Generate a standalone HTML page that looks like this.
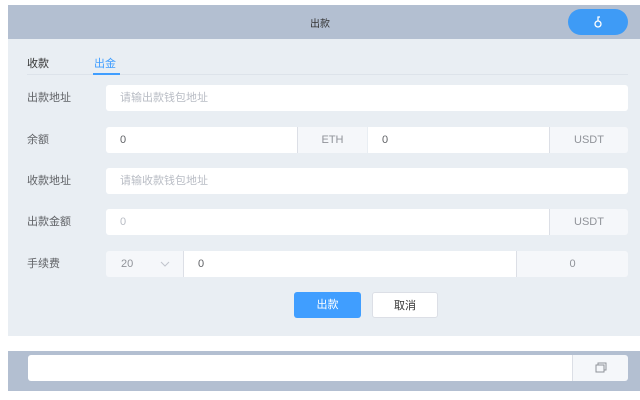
<!DOCTYPE html><html><head><meta charset="utf-8"><style>
*{margin:0;padding:0;box-sizing:border-box}
body{width:640px;height:400px;background:#fff;position:relative;overflow:hidden;font-family:"Liberation Sans","Noto Sans CJK SC",sans-serif;font-size:11px;color:#606266}
.a{position:absolute}
.hd{left:8px;top:5px;width:632px;height:34px;background:#b3bfd1}
.bd{left:8px;top:39px;width:632px;height:297px;background:#e9eef3}
.bt{left:8px;top:351px;width:632px;height:40px;background:#b3bfd1}
.in{background:#fff;border-radius:3px;height:26px;line-height:26px;padding-left:14px;color:#606266}
.ph{color:#b8bcc4}
.ad{background:#f5f7fa;height:26px;line-height:26px;text-align:center;color:#909399;border-left:1px solid #dcdfe6;border-radius:0 3px 3px 0}
.lb{left:27px;color:#606266}
</style></head><body>
<div class="a hd"></div>
<div class="a" style="left:0;width:640px;top:15px;text-align:center;font-size:10px;color:#333">出款</div>
<div class="a" style="left:568px;top:9px;width:60px;height:26px;border-radius:13px;background:#3e9bf6"></div>
<svg class="a" style="left:593px;top:15px" width="10" height="14" viewBox="0 0 10 14"><circle cx="5" cy="9" r="3" fill="none" stroke="#fff" stroke-width="1.3"/><path d="M5 6V2H7" fill="none" stroke="#fff" stroke-width="1.3"/></svg>
<div class="a bd"></div>
<div class="a" style="left:27px;top:55px;color:#333">收款</div>
<div class="a" style="left:94px;top:55px;color:#409eff">出金</div>
<div class="a" style="left:27px;top:74px;width:601px;height:1px;background:#dde3ea"></div>
<div class="a" style="left:93px;top:73px;width:27px;height:2px;background:#409eff"></div>

<div class="a lb" style="top:89px">出款地址</div>
<div class="a in ph" style="left:106px;top:85px;width:522px">请输出款钱包地址</div>

<div class="a lb" style="top:131px">余额</div>
<div class="a in" style="left:106px;top:127px;width:191px;border-radius:3px 0 0 3px">0</div>
<div class="a ad" style="left:297px;top:127px;width:70px;border-radius:0">ETH</div>
<div class="a in" style="left:368px;top:127px;width:181px;border-radius:0">0</div>
<div class="a ad" style="left:549px;top:127px;width:79px">USDT</div>

<div class="a lb" style="top:172px">收款地址</div>
<div class="a in ph" style="left:106px;top:168px;width:522px">请输收款钱包地址</div>

<div class="a lb" style="top:213px">出款金额</div>
<div class="a in ph" style="left:106px;top:209px;width:443px;border-radius:3px 0 0 3px">0</div>
<div class="a ad" style="left:549px;top:209px;width:79px">USDT</div>

<div class="a lb" style="top:255px">手续费</div>
<div class="a ad" style="left:106px;top:251px;width:77px;border-left:none;border-radius:3px 0 0 3px;text-align:left;padding-left:15px">20</div>
<svg class="a" style="left:160px;top:261px" width="10" height="6" viewBox="0 0 10 6"><path d="M1 1L5 5L9 1" fill="none" stroke="#c0c4cc" stroke-width="1"/></svg>
<div class="a in" style="left:183px;top:251px;width:333px;border-radius:0;border-left:1px solid #dcdfe6">0</div>
<div class="a ad" style="left:516px;top:251px;width:112px">0</div>

<div class="a" style="left:294px;top:292px;width:67px;height:26px;background:#409eff;border-radius:3px;color:#fff;text-align:center;line-height:26px">出款</div>
<div class="a" style="left:372px;top:292px;width:66px;height:26px;background:#fff;border-radius:3px;color:#333;text-align:center;line-height:26px;border:1px solid #dcdfe6">取消</div>

<div class="a bt"></div>
<div class="a in" style="left:28px;top:355px;width:544px;border-radius:3px 0 0 3px"></div>
<div class="a ad" style="left:572px;top:355px;width:56px"></div>
<svg class="a" style="left:595px;top:362px" width="12" height="11" viewBox="0 0 12 11"><rect x="1" y="3" width="8" height="7" fill="none" stroke="#909399"/><path d="M3 3V1H11V8H9" fill="none" stroke="#909399"/></svg>
</body></html>
